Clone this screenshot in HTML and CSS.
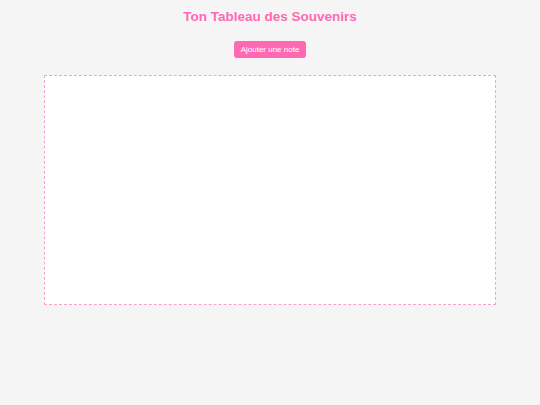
FILE: index.html
```html
<!DOCTYPE html>
<html>
<head>
<meta charset="utf-8">
<link rel="stylesheet" href="styles.css">
</head>
<body>
<h1 class="title">Ton Tableau des Souvenirs</h1>
<div class="actions"><button class="add-btn">Ajouter une note</button></div>
<div class="board"></div>
</body>
</html>
```
FILE: styles.css
```css
html, body {
  margin: 0;
  padding: 0;
  background: #f5f5f5;
  font-family: "Liberation Sans", Arial, sans-serif;
}
.title {
  margin: 8px 0 0;
  text-align: center;
  color: #ff69b4;
  font-size: 13.5px;
  font-weight: bold;
  line-height: 18px;
}
.actions {
  display: flex;
  justify-content: center;
  margin-top: 15px;
}
.add-btn {
  background: #ff69b4;
  color: #fff;
  border: none;
  border-radius: 3px;
  font-family: "Liberation Sans", Arial, sans-serif;
  font-size: 8px;
  height: 17px;
  width: 72px;
  padding: 0;
}
.board {
  margin: 17px auto 0;
  width: 450px;
  height: 228px;
  background: #fff;
  border: 1px dashed #fb9fd0;
}
```
